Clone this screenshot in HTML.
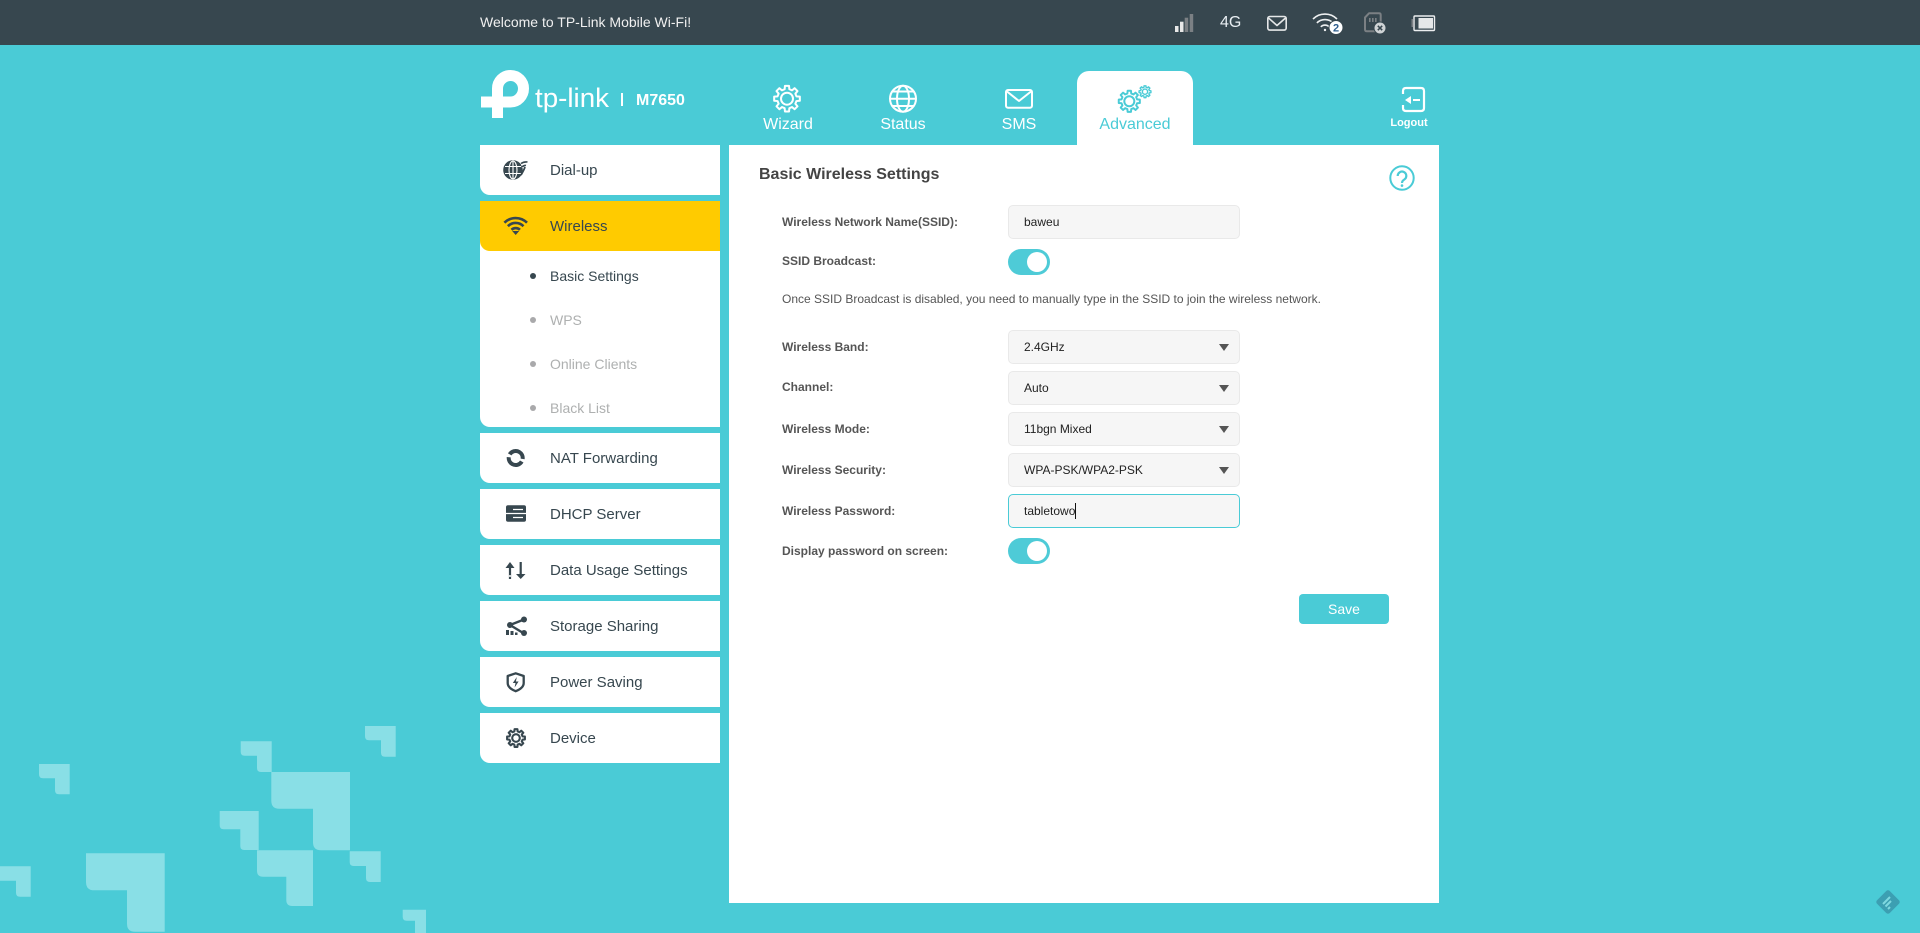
<!DOCTYPE html>
<html><head><meta charset="utf-8"><title>TP-Link M7650</title>
<style>
html,body{margin:0;padding:0;width:1920px;height:933px;overflow:hidden;background:#4acbd6;font-family:"Liberation Sans",Arial,sans-serif}
.a{position:absolute;white-space:nowrap}
#top{left:0;top:0;width:1920px;height:45px;background:#37474f}
.tab{color:#fff;font-size:16px;line-height:20px;text-align:center;top:115px;width:116px}
.side{left:480px;width:240px;height:50px;background:#fff;border-bottom-left-radius:10px}
.st{left:550px;font-size:15px;line-height:20px;color:#37474f}
.sub{left:550px;font-size:14px;line-height:20px;color:#aeb0b0}
.dot{left:530px;width:6px;height:6px;border-radius:3px;background:#a9a9ab}
.lb{left:782px;font-size:12px;font-weight:bold;color:#555;line-height:16px}
.in{left:1008px;width:230px;height:32px;background:#f6f6f6;border:1px solid #e9e9e9;border-radius:5px;font-size:12px;line-height:32px;color:#222;text-indent:15px}
.tg{left:1008px;width:42px;height:26px;border-radius:13px;background:#4ecbd7}
.tg i{position:absolute;left:19px;top:3px;width:20px;height:20px;border-radius:10px;background:#fff}
.ar{left:1219px;width:0;height:0;border-left:5px solid transparent;border-right:5px solid transparent;border-top:7px solid #555}
svg{position:absolute;left:0;top:0}
</style></head><body>
<svg width="1920" height="933" fill="#89dfe6">
<path d="M39 764H69.7V794.3H59Q55 794.3 55 790.3V778.3H43Q39 778.3 39 774.3Z"/>
<path d="M0 866.3H30.7V896.7H20Q16 896.7 16 892.7V880.7H4Q0 880.7 0 880.7Z"/>
<path d="M86 853.3H164.7V931.7H135Q127 931.7 127 923.7V890.3H94Q86 890.3 86 882.3Z"/>
<path d="M240.7 741.3H271.7V772H261Q257 772 257 768V755.7H244.7Q240.7 755.7 240.7 751.7Z"/>
<path d="M271.3 772H350V850.3H321Q313 850.3 313 842.3V808.7H279.3Q271.3 808.7 271.3 800.7Z"/>
<path d="M365 726H395.7V756.7H385Q381 756.7 381 752.7V740.3H369Q365 740.3 365 736.3Z"/>
<path d="M219.7 811H258.7V850H244.3Q240.3 850 240.3 846V829.3H223.7Q219.7 829.3 219.7 825.3Z"/>
<path d="M257 850.3H313V906H292.3Q286.3 906 286.3 900V876.7H263Q257 876.7 257 870.7Z"/>
<path d="M349.7 851.3H380.7V882H370Q366 882 366 878V866H353.7Q349.7 866 349.7 862Z"/>
<path d="M402.7 909.7H426V940H419Q415 940 415 936V920.7H406.7Q402.7 920.7 402.7 916.7Z"/>
</svg>
<div class="a" id="top"></div>
<div class="a" style="left:480px;top:12px;font-size:14px;line-height:20px;color:#f0f0f0">Welcome to TP-Link Mobile Wi-Fi!</div>
<div class="a" style="left:1220px;top:13px;font-size:16px;line-height:20px;color:#e8eef2">4G</div>

<div class="a" style="left:1077px;top:71px;width:116px;height:74px;background:#fff;border-radius:12px 12px 0 0"></div>
<div class="a tab" style="left:730px">Wizard</div>
<div class="a tab" style="left:845px">Status</div>
<div class="a tab" style="left:961px">SMS</div>
<div class="a tab" style="left:1077px;color:#4acbd6">Advanced</div>
<div class="a" style="left:1369px;top:116px;width:80px;text-align:center;color:#fff;font-size:11px;font-weight:bold;line-height:14px">Logout</div>
<div class="a" style="left:636px;top:91px;color:#fff;font-size:16px;font-weight:bold;line-height:20px">M7650</div>

<div class="a side" style="top:145px"></div>
<div class="a side" style="top:201px;height:226px"></div>
<div class="a side" style="top:201px;background:#ffcb00"></div>
<div class="a side" style="top:433px"></div>
<div class="a side" style="top:489px"></div>
<div class="a side" style="top:545px"></div>
<div class="a side" style="top:601px"></div>
<div class="a side" style="top:657px"></div>
<div class="a side" style="top:713px"></div>
<div class="a st" style="top:161px">Dial-up</div>
<div class="a st" style="top:217px">Wireless</div>
<div class="a st" style="top:449px">NAT Forwarding</div>
<div class="a st" style="top:505px">DHCP Server</div>
<div class="a st" style="top:561px">Data Usage Settings</div>
<div class="a st" style="top:617px">Storage Sharing</div>
<div class="a st" style="top:673px">Power Saving</div>
<div class="a st" style="top:729px">Device</div>
<div class="a dot" style="top:273px;background:#37474f"></div><div class="a sub" style="top:266px;color:#37474f">Basic Settings</div>
<div class="a dot" style="top:317px"></div><div class="a sub" style="top:310px">WPS</div>
<div class="a dot" style="top:361px"></div><div class="a sub" style="top:354px">Online Clients</div>
<div class="a dot" style="top:405px"></div><div class="a sub" style="top:398px">Black List</div>

<div class="a" style="left:729px;top:145px;width:710px;height:758px;background:#fff"></div>
<div class="a" style="left:759px;top:165px;font-size:16px;font-weight:bold;color:#444;line-height:20px">Basic Wireless Settings</div>

<div class="a lb" style="top:214px">Wireless Network Name(SSID):</div>
<div class="a in" style="top:205px">baweu</div>
<div class="a lb" style="top:253px">SSID Broadcast:</div>
<div class="a tg" style="top:249px"><i></i></div>
<div class="a" style="left:782px;top:291px;font-size:12px;line-height:16px;color:#555">Once SSID Broadcast is disabled, you need to manually type in the SSID to join the wireless network.</div>
<div class="a lb" style="top:339px">Wireless Band:</div>
<div class="a in" style="top:330px">2.4GHz</div><div class="a ar" style="top:344px"></div>
<div class="a lb" style="top:379px">Channel:</div>
<div class="a in" style="top:371px">Auto</div><div class="a ar" style="top:385px"></div>
<div class="a lb" style="top:421px">Wireless Mode:</div>
<div class="a in" style="top:412px">11bgn Mixed</div><div class="a ar" style="top:426px"></div>
<div class="a lb" style="top:462px">Wireless Security:</div>
<div class="a in" style="top:453px">WPA-PSK/WPA2-PSK</div><div class="a ar" style="top:467px"></div>
<div class="a lb" style="top:503px">Wireless Password:</div>
<div class="a in" style="top:494px;border-color:#4acbd6">tabletowo</div>
<div class="a" style="left:1075px;top:503px;width:1px;height:16px;background:#111"></div>
<div class="a lb" style="top:543px">Display password on screen:</div>
<div class="a tg" style="top:538px"><i></i></div>
<div class="a" style="left:1299px;top:594px;width:90px;height:30px;background:#4acbd6;border-radius:4px;color:#fff;font-size:14px;line-height:30px;text-align:center">Save</div>

<svg width="1920" height="933" fill="none" stroke-linejoin="round">
<defs><path id="g" d="M8.73-2.18L11.85-1.88V1.88L8.73 2.18L7.71 4.64L9.71 7.05L7.05 9.71L4.64 7.71L2.18 8.73L1.88 11.85H-1.88L-2.18 8.73L-4.64 7.71L-7.05 9.71L-9.71 7.05L-7.71 4.64L-8.73 2.18L-11.85 1.88V-1.88L-8.73-2.18L-7.71-4.64L-9.71-7.05L-7.05-9.71L-4.64-7.71L-2.18-8.73L-1.88-11.85H1.88L2.18-8.73L4.64-7.71L7.05-9.71L9.71-7.05L7.71-4.64Z"/></defs>

<!-- logo -->
<path d="M497.5 118V88.5A13 13 0 0 1 523.5 88.5A13 13.5 0 0 1 510.5 102H481" stroke="#fff" stroke-width="11" stroke-linejoin="miter"/>
<text x="535" y="107" fill="#fff" font-family="Liberation Sans" font-size="27" textLength="74" lengthAdjust="spacingAndGlyphs">tp-link</text>
<rect x="621" y="93" width="2" height="13" fill="#fff"/>

<!-- status bar -->
<g fill="#e8e8e8"><rect x="1175" y="26" width="3.5" height="6"/><rect x="1180" y="21.7" width="3.5" height="10.3"/></g>
<g fill="#7b8084"><rect x="1184.7" y="17.7" width="3.5" height="14.3"/><rect x="1189.7" y="14" width="3.5" height="18"/></g>
<rect x="1267.8" y="16.5" width="18.4" height="13.6" rx="2" stroke="#e5e7e8" stroke-width="1.6"/>
<path d="M1268.5 18L1277 25.5L1285.5 18" stroke="#e5e7e8" stroke-width="1.6"/>
<g stroke="#eef0f1" stroke-width="1.6"><path d="M1313 19A17 17 0 0 1 1337 19"/><path d="M1316.9 22.9A11.5 11.5 0 0 1 1333.1 22.9"/><path d="M1320.8 26.8A6 6 0 0 1 1329.2 26.8"/></g>
<circle cx="1325" cy="30" r="1.2" fill="#eef0f1"/>
<circle cx="1336" cy="27.5" r="7" fill="#fff" stroke="#37474f"/>
<text x="1336" y="31.5" text-anchor="middle" font-family="Liberation Sans" font-weight="bold" font-size="11" fill="#2f5f8f">2</text>
<path d="M1369 13.3H1379Q1380.7 13.3 1380.7 15V31.3H1367Q1365 31.3 1365 29.5V17.5Z" stroke="#7b8084" stroke-width="2"/>
<g fill="#7b8084"><rect x="1369" y="18" width="1.6" height="4"/><rect x="1372" y="18" width="1.6" height="4"/><rect x="1375" y="18" width="1.6" height="4"/></g>
<circle cx="1380" cy="28" r="6" fill="#cfd3d5" stroke="#37474f"/>
<path d="M1377.8 25.8L1382.2 30.2M1382.2 25.8L1377.8 30.2" stroke="#37474f" stroke-width="1.5"/>
<rect x="1414" y="16" width="20.5" height="14.5" rx="1" stroke="#eceeef" stroke-width="1.4"/>
<rect x="1411.5" y="19" width="2" height="8" fill="#7b8084"/>
<rect x="1418.5" y="18" width="14.5" height="10.5" fill="#e6e8e9"/>

<!-- tabs -->
<use href="#g" transform="translate(787 98.7) scale(1.083)" stroke="#fff" stroke-width="1.85"/>
<circle cx="787" cy="98.7" r="6" stroke="#fff" stroke-width="2"/>
<g stroke="#fff" stroke-width="2"><circle cx="903" cy="98.7" r="13"/><ellipse cx="903" cy="98.7" rx="6" ry="13"/><path d="M890 98.7H916M892 91.5H914M892 106H914"/></g>
<rect x="1006" y="90" width="26" height="17.7" rx="2" stroke="#fff" stroke-width="2"/>
<path d="M1007 91.5L1019 101L1031 91.5" stroke="#fff" stroke-width="2"/>
<use href="#g" transform="translate(1129.3 101.3) scale(.89)" stroke="#4acbd6" stroke-width="2.2"/>
<circle cx="1129.3" cy="101.3" r="5" stroke="#4acbd6" stroke-width="2"/>
<use href="#g" transform="translate(1145 91.7) scale(.5)" stroke="#4acbd6" stroke-width="2.8"/>
<circle cx="1145" cy="91.7" r="2.6" stroke="#4acbd6" stroke-width="1.4"/>
<path d="M1403 94V91Q1403 88 1406 88H1421Q1424 88 1424 91V108Q1424 111 1421 111H1406Q1403 111 1403 108V105" stroke="#fff" stroke-width="2.2"/>
<path d="M1405 100L1411 96V104Z" fill="#fff"/><rect x="1413" y="99" width="7" height="2" fill="#fff"/>

<!-- help -->
<circle cx="1402" cy="178" r="11.7" stroke="#4acbd6" stroke-width="2"/>
<path d="M1397.7 176A4.3 4.3 0 1 1 1404.6 179.3Q1402 180.8 1402 183" stroke="#4acbd6" stroke-width="2.2"/>
<circle cx="1402" cy="185.6" r="1.3" fill="#4acbd6"/>

<!-- side icons -->
<circle cx="513" cy="170" r="9.8" fill="#37474f"/>
<path d="M505 166.5H521M505 173.5H521M513 161V179" stroke="#fff" stroke-width="1.1"/>
<ellipse cx="513" cy="170" rx="4" ry="9" stroke="#fff" stroke-width="1.1"/>
<path d="M520 160H530V168H522Z" fill="#fff"/>
<path d="M521 163.5Q524 161.5 527.5 162M522 167Q524 165 526 165.5" stroke="#37474f" stroke-width="1.6"/>
<path d="M521 175Q524 170 525 167" stroke="#37474f" stroke-width="1.8"/>
<g stroke="#37474f" stroke-width="2.6"><path d="M504.4 222.7A16 16 0 0 1 527 222.7"/><path d="M507.9 226.2A11 11 0 0 1 523.5 226.2"/><path d="M511.5 229.8A6 6 0 0 1 519.9 229.8"/></g>
<path d="M512.2 231H519.2L515.7 235Z" fill="#37474f"/>
<circle cx="515.7" cy="458" r="7" stroke="#37474f" stroke-width="4" stroke-dasharray="19 3" transform="rotate(30 515.7 458)"/>
<rect x="506" y="505.3" width="20" height="16.4" rx="2" fill="#37474f"/>
<path d="M506 513.5H526M513 509.5H523M513 517.5H523" stroke="#fff" stroke-width="1.2"/>
<path d="M510 579V565M520.7 562V575" stroke="#37474f" stroke-width="2.2"/>
<path d="M505.5 568L510 562L514.5 568Z M516 574H525.5L520.7 579Z" fill="#37474f"/>
<circle cx="510" cy="576" r="1" fill="#fff"/>
<path d="M524 619.5L510 625L524 633.5" stroke="#37474f" stroke-width="2.4"/>
<circle cx="524" cy="619.5" r="3" fill="#37474f"/><circle cx="510" cy="625" r="3" fill="#37474f"/><circle cx="524" cy="633" r="3" fill="#37474f"/>
<g fill="#37474f"><rect x="506" y="630" width="3" height="5"/><rect x="510.5" y="631" width="3" height="4"/><rect x="515" y="632.5" width="2.5" height="2.5"/></g>
<path d="M515.7 673.3L523.7 676V683Q523.7 688 515.7 691.2Q507.7 688 507.7 683V676Z" stroke="#37474f" stroke-width="2.3"/>
<path d="M516.8 677L512.8 683H515.5L514.6 687.5L518.6 681.5H515.9Z" fill="#37474f"/>
<use href="#g" transform="translate(516 738) scale(.75)" stroke="#37474f" stroke-width="2.8"/>
<circle cx="516" cy="738" r="3.8" stroke="#37474f" stroke-width="2.1"/>

<!-- corner badge -->
<rect x="1879" y="893" width="18" height="18" rx="2.5" transform="rotate(45 1888 902)" fill="#3c9fb2"/>
<path d="M1883 904L1890 897M1885.5 906.5L1891 901M1888 909L1890 907" stroke="#7fd8e0" stroke-width="2"/>
</svg>
</body></html>
